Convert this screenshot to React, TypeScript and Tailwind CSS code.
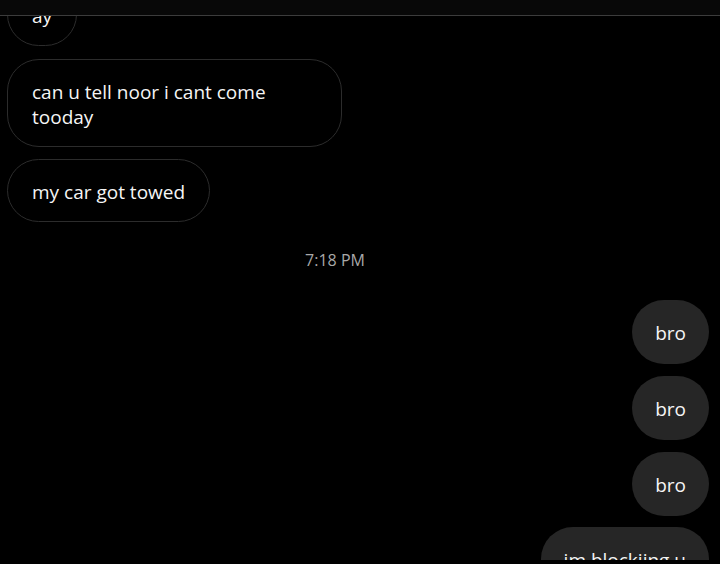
import React from "react";

const font = { fontFamily: '"Open Sans", "Noto Sans", sans-serif' };

function Left({ children, className = "" }: { children: React.ReactNode; className?: string }) {
  return (
    <div className="flex justify-start pl-[7px]">
      <div
        className={`max-w-[335px] rounded-[32px] border border-[#2c2c2c] px-6 pt-[20px] pb-[16px] text-[19px] leading-[25px] text-[#f5f5f5] ${className}`}
      >
        {children}
      </div>
    </div>
  );
}

function Right({ children }: { children: React.ReactNode }) {
  return (
    <div className="flex justify-end pr-[11px]">
      <div className="flex h-[64px] items-center rounded-[32px] bg-[#262626] px-[23px] pt-[3px] text-[19px] leading-[25px] text-[#f5f5f5]">
        {children}
      </div>
    </div>
  );
}

export default function App() {
  return (
    <div className="flex h-[564px] w-[720px] flex-col overflow-hidden bg-black" style={font}>
      <div className="h-[16px] shrink-0 border-b border-[#3c3c3c] bg-[#080808]" />
      <div className="flex-1 overflow-hidden">
        <div className="-mt-[33px] flex flex-col">
          <Left>ay</Left>
          <div className="h-[13px]" />
          <Left>can u tell noor i cant come tooday</Left>
          <div className="h-[12px]" />
          <Left>my car got towed</Left>
          <div className="mt-[26px] pr-[50px] text-center text-[16px] leading-[24px] text-[#a8a8a8]">7:18 PM</div>
          <div className="h-[28px]" />
          <Right>bro</Right>
          <div className="h-[12px]" />
          <Right>bro</Right>
          <div className="h-[12px]" />
          <Right>bro</Right>
          <div className="h-[11px]" />
          <Right>im blockiing u</Right>
        </div>
      </div>
      <div className="h-[4px] shrink-0 bg-black" />
    </div>
  );
}
